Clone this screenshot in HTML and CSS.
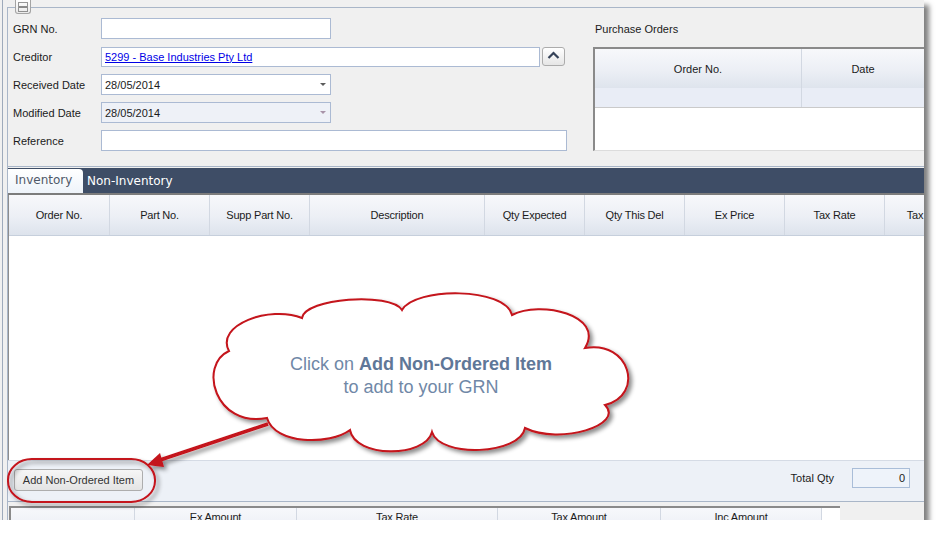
FILE: index.html
```html
<!DOCTYPE html>
<html lang="en">
<head>
    <meta charset="UTF-8">
    <meta name="viewport" content="width=device-width, initial-scale=1.0">
    <title>Goods Received Note</title>
    <link rel="stylesheet" href="styles.css">
</head>
<body>
    <div class="window">
        <div class="edge"></div>
        <div class="main">
            <button class="collapse">
                <svg width="14" height="12" viewBox="0 0 14 12">
                    <rect x="2.5" y="1.5" width="9" height="9" fill="none" stroke="#333" stroke-dasharray="1 1"/>
                    <line x1="3" y1="6" x2="11" y2="6" stroke="#222"/>
                </svg>
            </button>
            <div class="group">
                <div class="form">
                    <div class="row">
                        <label>GRN No.</label>
                        <div class="field short"></div>
                    </div>
                    <div class="row">
                        <label>Creditor</label>
                        <div class="field creditor"><a href="#">5299 - Base Industries Pty Ltd</a></div>
                        <button class="up-btn">
                            <svg width="21" height="17" viewBox="0 0 21 17">
                                <path d="M5.5 10 L10.5 5 L15.5 10" fill="none" stroke="#354258" stroke-width="2.2"/>
                            </svg>
                        </button>
                    </div>
                    <div class="row">
                        <label>Received Date</label>
                        <div class="field short combo">28/05/2014<span class="drop"></span></div>
                    </div>
                    <div class="row">
                        <label>Modified Date</label>
                        <div class="field short combo disabled">28/05/2014<span class="drop"></span></div>
                    </div>
                    <div class="row">
                        <label>Reference</label>
                        <div class="field wide"></div>
                    </div>
                </div>
                <div class="po">
                    <div class="po-title">Purchase Orders</div>
                    <div class="po-grid">
                        <div class="po-head">
                            <div class="c1">Order No.</div>
                            <div class="c2">Date</div>
                        </div>
                        <div class="po-row">
                            <div class="c1"></div>
                            <div class="c2"></div>
                        </div>
                    </div>
                </div>
            </div>

            <div class="tabs">
                <div class="tab active">Inventory</div>
                <div class="tab">Non-Inventory</div>
            </div>

            <div class="grid">
                <div class="grid-head">
                    <div class="first">Order No.</div>
                    <div>Part No.</div>
                    <div>Supp Part No.</div>
                    <div class="desc">Description</div>
                    <div>Qty Expected</div>
                    <div>Qty This Del</div>
                    <div>Ex Price</div>
                    <div>Tax Rate</div>
                    <div>Tax Amount</div>
                </div>
                <div class="grid-body"></div>
            </div>

            <div class="bar">
                <button class="btn">Add Non-Ordered Item</button>
                <div class="total">
                    <span>Total Qty</span>
                    <div class="qty">0</div>
                </div>
            </div>
            <div class="sep"></div>

            <div class="totals">
                <div class="t0"></div>
                <div class="t1">Ex Amount</div>
                <div class="t2">Tax Rate</div>
                <div class="t3">Tax Amount</div>
                <div class="t4">Inc Amount</div>
            </div>
        </div>

        <!-- annotation drawn over the screen -->
        <svg class="callout" width="924" height="520" viewBox="0 0 924 520">
            <defs>
                <filter id="shade" x="-10%" y="-10%" width="125%" height="130%">
                    <feDropShadow dx="3" dy="3" stdDeviation="2" flood-color="#000" flood-opacity="0.45"/>
                </filter>
            </defs>
            <g filter="url(#shade)">
                <path class="cloud" d="M267,418
                    C215,428 198,365 229,351
                    C215,325 270,305 302,318
                    C305,298 390,292 402,310
                    C415,287 505,287 512,315
                    C540,300 605,315 585,348
                    C630,340 645,395 605,405
                    C625,425 560,445 525,428
                    C520,455 440,458 432,432
                    C425,458 355,458 350,430
                    C330,445 275,445 267,418 Z"/>
                <line class="arrow" x1="268" y1="424" x2="160" y2="460"/>
                <polygon class="head" points="147,465 160,453 164,467"/>
                <rect class="ring" x="8" y="459" width="147" height="43" rx="24" ry="21"/>
            </g>
            <text x="421" y="370" text-anchor="middle">Click on <tspan class="strong">Add Non-Ordered Item</tspan></text>
            <text x="421" y="393" text-anchor="middle">to add to your GRN</text>
        </svg>
    </div>
</body>
</html>
```

FILE: styles.css
```css
* {
    margin: 0;
    padding: 0;
    box-sizing: border-box;
}
body {
    background-color: #fff;
    font-family: "Liberation Sans", Arial, sans-serif;
    font-size: 11px;
    color: #1b1b1b;
}
.window {
    position: relative;
    display: flex;
    width: 924px;
    height: 520px;
    overflow: hidden;
    background-color: #f0f0f0;
    box-shadow: 5px 5px 5px rgba(0, 0, 0, 0.5);
}
.edge {
    flex: none;
    width: 3px;
    margin-right: 4px;
    border-right: 1px solid #9eaabb;
}
.main {
    position: relative;
    flex: 1;
    min-width: 0;
    margin-top: 7px;
    border-left: 1px solid #a9b6c8;
    border-top: 1px solid #a9b6c8;
    display: flex;
    flex-direction: column;
}
.main > * {
    flex-shrink: 0;
}
.collapse {
    position: absolute;
    top: -8px;
    left: 7px;
    width: 16px;
    height: 14px;
    border: 1px solid #a4a4a4;
    border-top: none;
    border-radius: 0 0 3px 3px;
    background: linear-gradient(#ffffff, #eaeaea);
    display: flex;
    align-items: center;
    justify-content: center;
}

/* header form */
.group {
    display: flex;
    height: 159px;
    border-bottom: 1px solid #a9b6c8;
}
.form {
    flex: none;
    width: 585px;
    padding: 10px 0 0 5px;
    display: flex;
    flex-direction: column;
    gap: 7px;
}
.row {
    display: flex;
    align-items: center;
    height: 21px;
}
.row label {
    width: 88px;
}
.field {
    height: 21px;
    border: 1px solid #abbad3;
    background-color: #fff;
    display: flex;
    align-items: center;
    padding: 0 3px;
}
.field a {
    color: #0000e6;
}
.short {
    width: 230px;
}
.creditor {
    width: 439px;
    height: 20px;
}
.wide {
    width: 466px;
}
.drop {
    margin-left: auto;
    margin-right: 1px;
    width: 0;
    height: 0;
    border-left: 3px solid transparent;
    border-right: 3px solid transparent;
    border-top: 3px solid #5c5c5c;
}
.disabled {
    background-color: #eef1f7;
}
.disabled .drop {
    border-top-color: #a893a8;
}
.up-btn {
    margin-left: 2px;
    width: 23px;
    height: 19px;
    border: 1px solid #acacac;
    border-radius: 3px;
    background: linear-gradient(#ffffff, #e6e6e6);
    display: flex;
    align-items: center;
    justify-content: center;
}

/* purchase orders */
.po {
    flex: 1;
    padding-top: 15px;
}
.po-title {
    line-height: 13px;
    padding-left: 2px;
}
.po-grid {
    margin-top: 11px;
    height: 104px;
    border-top: 2px solid #8a8a8a;
    border-left: 2px solid #8a8a8a;
    border-bottom: 1px solid #dcdcdc;
    background-color: #fff;
}
.po-head {
    display: flex;
    height: 39px;
    background: linear-gradient(#f7f8fb, #eceff5 55%, #dee4ed);
}
.po-row {
    display: flex;
    height: 20px;
    background-color: #e9edf6;
    border-bottom: 1px solid #cacaca;
}
.po .c1 {
    width: 207px;
    border-right: 1px solid #d2d8e2;
}
.po .c2 {
    flex: 1;
}
.po-head div {
    display: flex;
    align-items: center;
    justify-content: center;
}

/* tabs */
.tabs {
    margin-top: 1px;
    height: 27px;
    display: flex;
    background-color: #3e4d66;
    border-bottom: 2px solid #7c7c7c;
}
.tab {
    font-family: "DejaVu Sans", sans-serif;
    font-size: 12px;
    color: #fff;
    display: flex;
    align-items: center;
    padding: 0 4px;
}
.tab.active {
    width: 75px;
    margin-top: 1px;
    padding-left: 7px;
    padding-bottom: 3px;
    color: #4f5868;
    background: linear-gradient(#ffffff, #eef3fa);
    border-top-right-radius: 4px;
}

/* main grid */
.grid {
    border-left: 1px solid #8d8d8d;
    display: flex;
    flex-direction: column;
}
.grid-head {
    display: flex;
    height: 41px;
    background: linear-gradient(#f7f8fb, #eceff5 55%, #dde3ec);
    border-bottom: 1px solid #c6cfdc;
}
.grid-head div {
    flex: none;
    width: 100px;
    border-right: 1px solid #d2d8e2;
    display: flex;
    align-items: center;
    justify-content: center;
    letter-spacing: -0.2px;
}
.grid-head .first {
    width: 101px;
}
.grid-head .desc {
    width: 175px;
}
.grid-body {
    height: 224px;
    background-color: #fff;
}

/* bottom bar */
.bar {
    height: 41px;
    border-top: 1px solid #d5dbe5;
    background-color: #edf1f7;
    display: flex;
    align-items: flex-start;
    padding: 8px 14px 0 6px;
}
.btn {
    width: 129px;
    height: 22px;
    border: 1px solid #adadad;
    border-radius: 3px;
    background: linear-gradient(#f6f6f6, #e4e4e4);
    font-family: "Liberation Sans", Arial, sans-serif;
    font-size: 11px;
    color: #333;
}
.total {
    margin-left: auto;
    margin-top: -1px;
    display: flex;
    align-items: center;
    gap: 18px;
}
.qty {
    width: 58px;
    height: 20px;
    border: 1px solid #a9bdd8;
    background-color: #eef3fa;
    text-align: right;
    line-height: 18px;
    padding-right: 4px;
}
.sep {
    height: 1px;
    background-color: #a9b6c8;
}

/* totals grid */
.totals {
    margin: 4px 0 0 1px;
    width: 831px;
    height: 40px;
    border-top: 2px solid #8a8a8a;
    border-left: 2px solid #8a8a8a;
    background-color: #fff;
    display: flex;
}
.totals div {
    height: 40px;
    padding-top: 3px;
    text-align: center;
    border-right: 1px solid #d2d8e2;
    background: linear-gradient(#f7f8fb, #eceff5 55%, #dde3ec);
    letter-spacing: -0.2px;
}
.totals .t0 { width: 124px; }
.totals .t1 { width: 162px; }
.totals .t2 { width: 201px; }
.totals .t3 { width: 163px; }
.totals .t4 { width: 161px; }

/* annotation */
.callout {
    position: absolute;
    left: 0;
    top: 0;
    pointer-events: none;
}
.callout .cloud {
    fill: #fff;
    stroke: #c4121a;
    stroke-width: 2;
}
.callout .arrow {
    stroke: #c4121a;
    stroke-width: 3.5;
}
.callout .head {
    fill: #c4121a;
}
.callout .ring {
    fill: none;
    stroke: #c4121a;
    stroke-width: 2;
}
.callout text {
    font-family: "Liberation Sans", Arial, sans-serif;
    font-size: 18px;
    fill: #7088a7;
}
.callout .strong {
    font-weight: bold;
    fill: #5f7798;
}
```
